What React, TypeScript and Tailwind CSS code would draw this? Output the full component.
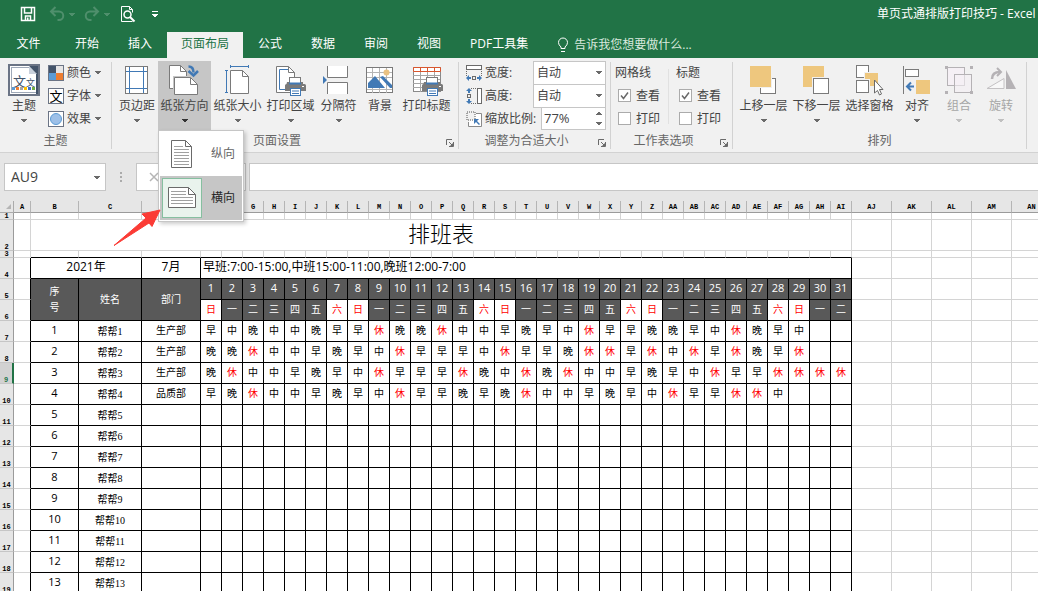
import React, { useState } from 'react';
import clsx from 'clsx';

const TABS = ['开始', '插入', '页面布局', '公式', '数据', '审阅', '视图', 'PDF工具集'];
const WEEK = ['日', '一', '二', '三', '四', '五', '六'];
const DAYS = Array.from({ length: 31 }, (_, i) => i + 1);

const DAY_LETTERS = [
  'E', 'F', 'G', 'H', 'I', 'J', 'K', 'L', 'M', 'N', 'O', 'P', 'Q', 'R', 'S', 'T', 'U', 'V', 'W', 'X', 'Y', 'Z',
  'AA', 'AB', 'AC', 'AD', 'AE', 'AF', 'AG', 'AH', 'AI'
];
const EXTRA_LETTERS = ['AJ', 'AK', 'AL', 'AM', 'AN'];

const STAFF = [
  { dept: '生产部', shifts: '早中晚中中晚早早休晚晚休中中早晚早中休早早晚晚早中休晚早中' },
  { dept: '生产部', shifts: '晚晚休中中早晚早中休早早早中休早早晚休休早休中休早休晚早休' },
  { dept: '生产部', shifts: '晚休中中早晚早中休早早早休晚中休晚休中中早晚早中休早早休休休休' },
  { dept: '品质部', shifts: '早晚休中中早晚早中休早早晚早晚休中中早晚早中休早早休休中' },
  ...Array.from({ length: 9 }, () => ({ dept: '', shifts: '' }))
];

const Caret = ({ className }: { className?: string }) => (
  <svg viewBox="0 0 6 3" className={clsx('w-[6px] h-[3px] shrink-0', className)} shapeRendering="crispEdges" aria-hidden="true">
    <path d="M0 0h6v1h-1v1h-1v1h-2v-1h-1v-1h-1z" fill="currentColor" />
  </svg>
);

const Printer = ({ x }: { x: number }) => (
  <g transform={`translate(${x} 13)`}>
    <path d="M2 5h3v2h11V5h2v2h1.5q1.5 0 1.5 1.5V14h-5v-2H5v2H0V8.500q0-1.500 1.500-1.500z" fill="#7a7a7a" />
    <rect x="4.500" y=".5" width="11" height="7" fill="#fff" stroke="#7a7a7a" />
    <path d="M4 6.500h12" stroke="#4179b5" strokeWidth="2" />
    <rect x="5.500" y="11.500" width="10" height="7" fill="#fff" stroke="#4179b5" />
    <path d="M7 14h7M7 16.500h7" stroke="#4179b5" />
    <rect x="17" y="9" width="2" height="1" fill="#fff" />
  </g>
);

const icons: Record<string, React.ReactNode> = {
  theme: (
    <>
      <rect x="1" y="1" width="30" height="30" fill="#fff" stroke="#6b7485" strokeWidth="2" />
      <rect x="3.500" y="3.500" width="25" height="25" fill="none" stroke="#9fa9b8" />
      <path d="M21 2h9v28h-2V10z" fill="#44546a" />
      <path d="M21 2l8 8h-8z" fill="#c9d1dc" />
      <text x="5" y="22" fontSize="13" fill="#44546a" fontFamily="'Noto Sans CJK SC', sans-serif">文</text>
      <text x="18" y="22" fontSize="9" fill="#44546a" fontFamily="'Noto Sans CJK SC', sans-serif">文</text>
      <path d="M4 23h3v3H4z" fill="#5b9bd5" />
      <path d="M8 23h3v3H8z" fill="#ed7d31" />
      <path d="M12 23h3v3h-3z" fill="#a5a5a5" />
      <path d="M16 23h3v3h-3z" fill="#ffc000" />
      <path d="M20 23h3v3h-3z" fill="#4472c4" />
      <path d="M24 23h3v3h-3z" fill="#70ad47" />
    </>
  ),
  margins: (
    <>
      <rect x="6.500" y="2.500" width="22" height="27" fill="#fff" stroke="#7a7a7a" />
      <path d="M10.500 3v26M24.500 3v26M7 7.500h21M7 24.500h21" stroke="#4179b5" />
    </>
  ),
  orientation: (
    <>
      <path d="M3.500 1.500h11l6 6v17h-17z" fill="#fff" stroke="#7a7a7a" />
      <path d="M14.500 1.500v6h6" fill="none" stroke="#7a7a7a" />
      <path d="M7 12h19v3H10v11H7z" fill="#c6c6c6" />
      <path d="M8.500 13.500h16l7 7v10h-23z" fill="#fff" stroke="#7a7a7a" />
      <path d="M24.500 13.500v7h7" fill="none" stroke="#7a7a7a" />
      <path d="M22.500 2.500q5 0 5 6" fill="none" stroke="#4179b5" strokeWidth="2.500" />
      <path d="M22.500 7l5 4.500L32 7" fill="none" stroke="#4179b5" strokeWidth="2.500" />
    </>
  ),
  size: (
    <>
      <path d="M11.500 6.500h12l6 6v17h-18z" fill="#fff" stroke="#7a7a7a" />
      <path d="M23.500 6.500v6h6" fill="none" stroke="#7a7a7a" />
      <path d="M11 2.500h19M11.500 1v3M29.500 1v3M7.500 6v23M6 6.500h3M6 28.500h3" stroke="#4179b5" />
    </>
  ),
  area: (
    <>
      <path d="M4.500 2.500h12l6 6v20h-18z" fill="#fff" stroke="#7a7a7a" />
      <path d="M13 5.500H7.500v20H13M13 5.500h3" fill="none" stroke="#4179b5" />
      <path d="M16.500 2.500v6h6" fill="none" stroke="#7a7a7a" />
      <Printer x={13} />
    </>
  ),
  breaks: (
    <>
      <path d="M7.500 2v11.500h20V2" fill="#fff" stroke="#7a7a7a" />
      <path d="M7.500 30V18.500h20V30" fill="#fff" stroke="#7a7a7a" />
      <path d="M3 12l4 4-4 4z" fill="#4179b5" />
    </>
  ),
  background: (
    <>
      <rect x="4.500" y="3.500" width="26" height="25" fill="#fff" stroke="#7a7a7a" />
      <path d="M10.500 4v25M17.500 4v25M24.500 4v25M5 8.500h25M5 13.500h25M5 25.500h25" stroke="#b5b5b5" />
      <circle cx="24.500" cy="8.500" r="3" fill="#eac282" />
      <path d="M6 24v-5l7-7 10 12zM18 13l3-1 9 9v3h-2z" fill="#4179b5" />
    </>
  ),
  titles: (
    <>
      <rect x="5.500" y="3.500" width="27" height="24" fill="#fff" stroke="#8a8a8a" />
      <path d="M5 11.500h27M5 15.500h27M5 19.500h27M5 23.500h27M12.500 4v24M19.500 4v24M26.500 4v24" stroke="#a6a6a6" />
      <path d="M5.500 3.500h27v4h-27zM12.500 4v3M19.500 4v3M26.500 4v3" fill="#fff" stroke="#d8562e" />
      <Printer x={14} />
    </>
  ),
  forward: (
    <>
      <rect x="15.500" y="14.500" width="15" height="15" fill="#fff" stroke="#7a7a7a" />
      <path d="M5 2h22v22H5z" fill="#f1f1f1" />
      <path d="M5 2h21v21H5z" fill="#eec77e" />
    </>
  ),
  backward: (
    <>
      <path d="M5 2h21v21H5z" fill="#eec77e" />
      <path d="M14 13h18v18H14z" fill="#f1f1f1" />
      <rect x="15.500" y="14.500" width="15" height="15" fill="#fff" stroke="#7a7a7a" />
    </>
  ),
  pane: (
    <>
      <rect x="5.500" y="1.500" width="12" height="12" fill="#fff" stroke="#7a7a7a" />
      <path d="M13 8h14v14H13z" fill="#f1f1f1" />
      <path d="M14 9h13v13H14z" fill="#eec77e" />
      <path d="M13 15h6v8h-6z" fill="#f1f1f1" />
      <rect x="5.500" y="16.500" width="12" height="12" fill="#fff" stroke="#7a7a7a" />
      <path d="M23.500 16v13l3-2.500 2 4.500 2-1-2-4.500h3.500z" fill="#fff" stroke="#6a6a6a" />
    </>
  ),
  align: (
    <>
      <path d="M4.500 2v28" stroke="#7a7a7a" />
      <rect x="6.500" y="5.500" width="13" height="7" fill="#fff" stroke="#7a7a7a" />
      <path d="M17 16h14v14H17z" fill="#eec77e" />
      <path d="M15 22.500H8M12 18.500l-4 4 4 4" fill="none" stroke="#4179b5" strokeWidth="2" />
    </>
  ),
  group: (
    <>
      <rect x="6.500" y="3.500" width="17" height="18" fill="#f5f0f5" stroke="#b5b2b5" />
      <rect x="13.500" y="10.500" width="17" height="18" fill="#f5f0f5" fillOpacity=".6" stroke="#b5b2b5" />
      <path d="M4 2h3v3H4zM29 2h3v3h-3zM4 27h3v3H4zM29 27h3v3h-3z" fill="#b5b2b5" />
    </>
  ),
  rotate: (
    <>
      <path d="M4 24.500l17-10v10z" fill="#f8f8f8" stroke="#c4c2c4" />
      <path d="M23 6l10 19H23z" fill="#b5b2b5" />
      <path d="M9 15q0-7 8-7" fill="none" stroke="#b5b2b5" strokeWidth="2.500" />
      <path d="M14 4l4 4-4 4" fill="none" stroke="#b5b2b5" strokeWidth="2" />
    </>
  )
};

const BigButton = ({ icon, label, width, caret = true, active = false, disabled = false }: {
  icon: string; label: string; width: string; caret?: boolean; active?: boolean; disabled?: boolean;
}) => {
  const wide = width === 'w-[53px]' || width === 'w-[43px]';
  const size = icon === 'theme' ? 'w-8' : wide ? 'w-[37px]' : 'w-9';
  const box = icon === 'theme' ? '0 0 32 32' : wide ? '0 0 37 32' : '0 0 36 32';
  return (
    <button
      type="button"
      disabled={disabled}
      className={clsx(
        'flex h-[69px] shrink-0 flex-col items-center pt-[3px] whitespace-nowrap',
        width,
        active && 'bg-[#c6c6c6]',
        disabled && 'text-[#a6a6a6]'
      )}
    >
      <svg viewBox={box} className={clsx('h-8 shrink-0', size)} aria-hidden="true">{icons[icon]}</svg>
      <span className="leading-5">{label}</span>
      {caret && <Caret className={clsx('mt-[3px]', disabled ? 'text-[#c0c0c0]' : active ? 'text-[#333]' : 'text-[#6a6a6a]')} />}
    </button>
  );
};

const RibbonGroup = ({ title, width, launcher = false, children }: {
  title: string; width: string; launcher?: boolean; children: React.ReactNode;
}) => (
  <section className={clsx('flex shrink-0 pt-[3px]', width)}>
    <div className="flex min-w-0 flex-1 flex-col">
      <div className="flex h-[69px]">{children}</div>
      <div className="flex h-6 items-center">
        <h2 className={clsx('flex-1 text-center text-[#666]', launcher && 'pl-1 pr-2')}>{title}</h2>
        {launcher && (
          <button type="button" aria-label={title} className="mt-1 mr-1 w-2">
            <svg viewBox="0 0 8 8" className="h-2 w-2" aria-hidden="true">
              <path d="M.5 6V.5H6M3 3l3 3M7.500 3v4.500H3" fill="none" stroke="#6a6a6a" />
              <path d="M7 4v3H4z" fill="#6a6a6a" />
            </svg>
          </button>
        )}
      </div>
    </div>
    <div className="mt-px h-[87px] w-px bg-[#d2d2d2]" />
  </section>
);

const SmallButton = ({ label, children }: { label: string; children: React.ReactNode }) => (
  <button type="button" className="flex h-[23px] items-center">
    <svg viewBox="0 0 16 16" className="mr-[3px] h-4 w-4 overflow-visible" aria-hidden="true">{children}</svg>
    {label}
    <Caret className="ml-1 text-[#6a6a6a]" />
  </button>
);

const ScaleRow = ({ id, label, icon, children }: {
  id: string; label: string; icon: React.ReactNode; children: React.ReactNode;
}) => (
  <div className="flex h-[23px] items-center">
    <svg viewBox="0 0 16 16" className="mr-[3px] h-4 w-4 shrink-0" aria-hidden="true">{icon}</svg>
    <label htmlFor={id} className="flex-1 whitespace-nowrap">{label}</label>
    {children}
  </div>
);

const AutoSelect = ({ id }: { id: string }) => (
  <div className="relative">
    <select id={id} className="block h-6 w-[73px] appearance-none border border-[#c6c6c6] bg-white pl-[3px] leading-5">
      <option>自动</option>
    </select>
    <Caret className="pointer-events-none absolute top-[10px] right-1 text-[#6a6a6a]" />
  </div>
);

const Check = ({ label, defaultChecked = false }: { label: string; defaultChecked?: boolean }) => (
  <label className="flex h-[23px] items-center pl-[3px]">
    <span className="relative mr-[5px] h-[13px] w-[13px]">
      <input
        type="checkbox"
        defaultChecked={defaultChecked}
        className="peer block h-[13px] w-[13px] appearance-none border border-[#ababab] bg-white"
      />
      <svg viewBox="0 0 13 13" className="pointer-events-none absolute inset-0 hidden peer-checked:block" aria-hidden="true">
        <path d="M3 6.500l2.500 3L10 3.500" fill="none" stroke="#6a6a6a" strokeWidth="1.500" />
      </svg>
    </span>
    {label}
  </label>
);

const OrientationMenu = () => (
  <div role="menu" className="absolute top-[69px] left-0 z-10 w-[86px] border border-[#c6c6c6] bg-white p-px shadow-[2px_2px_4px_rgba(0,0,0,0.2)]">
    <button type="button" role="menuitem" className="flex h-11 w-full items-center">
      <svg viewBox="0 0 40 40" className="mr-[9px] ml-0.5 h-10 w-10" aria-hidden="true">
        <path d="M9.500 6.500h14l6 6v21h-20z" fill="#fff" stroke="#6a6a6a" />
        <path d="M23.500 6.500v6h6" fill="none" stroke="#6a6a6a" />
        <path d="M12 12.500h9M12 15.500h15M12 18.500h15M12 21.500h15M12 24.500h15M12 27.500h15M12 30.500h15" stroke="#a0a0a0" />
      </svg>
      <span className="text-[#666]">纵向</span>
    </button>
    <button type="button" role="menuitem" className="flex h-11 w-full items-center bg-[#c6c6c6] text-[#262626]">
      <span className="mr-[9px] ml-0.5 border border-[#86bfa0] bg-[#e9f3ed]">
        <svg viewBox="0 0 38 38" className="h-[38px] w-[38px]" aria-hidden="true">
          <path d="M5.500 8.500h20l7 7v13h-27z" fill="#fff" stroke="#6a6a6a" />
          <path d="M25.500 8.500v7h7" fill="none" stroke="#6a6a6a" />
          <path d="M8 12.500h15M8 15.500h15M8 18.500h22M8 21.500h22M8 24.500h22" stroke="#a0a0a0" />
        </svg>
      </span>
      横向
    </button>
    <svg viewBox="0 0 48 38" className="pointer-events-none absolute top-[78px] left-[-46px] h-[38px] w-12" aria-hidden="true">
      <path d="M47 1L29 5l4 4L1 36.500 36 14l3 3.500z" fill="#fb3b35" stroke="#fb3b35" strokeLinejoin="round" />
    </svg>
  </div>
);

const TitleBar = () => (
  <header className="flex h-7 items-center pl-5 text-white">
    <button type="button" aria-label="保存">
      <svg viewBox="0 0 16 16" className="h-4 w-4" aria-hidden="true">
        <path d="M1.500 1.500h13v13h-13zM4.500 2v5h7V2M5.500 14v-4h5v4" fill="none" stroke="#fff" strokeWidth="1.500" />
        <path d="M7 11.500h1.500V14H7z" fill="#fff" />
      </svg>
    </button>
    <button type="button" aria-label="撤消" className="ml-[13px] flex items-center text-[#4f8f6c]">
      <svg viewBox="0 0 16 16" className="h-4 w-4" aria-hidden="true">
        <path d="M6.500 1L2 5.500 6.500 10M2 5.500h8a4 4 0 0 1 0 8.500H8.500" fill="none" stroke="currentColor" strokeWidth="2" />
      </svg>
      <Caret className="ml-1" />
    </button>
    <button type="button" aria-label="恢复" className="ml-[9px] flex items-center text-[#4f8f6c]">
      <svg viewBox="0 0 16 16" className="h-4 w-4" aria-hidden="true">
        <path d="M9.500 1L14 5.500 9.500 10M14 5.500H6A4 4 0 0 0 6 14h1.500" fill="none" stroke="currentColor" strokeWidth="2" />
      </svg>
      <Caret className="ml-1" />
    </button>
    <button type="button" aria-label="打印预览" className="ml-[10px]">
      <svg viewBox="0 0 16 18" className="h-[18px] w-4" aria-hidden="true">
        <path d="M12.500 16.500H1.500v-15h8l3 3v3M9.500 1.500v3h3" fill="none" stroke="#fff" />
        <circle cx="7.500" cy="9.500" r="3.500" fill="#217346" stroke="#fff" strokeWidth="1.500" />
        <path d="M10 12l4.500 4.500" stroke="#fff" strokeWidth="2" />
      </svg>
    </button>
    <button type="button" aria-label="自定义快速访问工具栏" className="ml-4 flex flex-col items-center gap-[2px]">
      <span className="h-px w-[6px] bg-white" />
      <Caret />
    </button>
    <h1 className="ml-auto w-[161px] shrink-0 whitespace-nowrap">单页式通排版打印技巧 - Excel</h1>
  </header>
);

const TabBar = () => {
  const [active, setActive] = useState('页面布局');
  return (
    <nav className="mt-1 flex h-[26px] gap-px text-white">
      <button type="button" className="w-[57px] pb-0.5">文件</button>
      <div className="w-0.5" />
      {TABS.map((tab) => (
        <button
          key={tab}
          type="button"
          onClick={() => setActive(tab)}
          className={clsx('px-3.5 pb-0.5 whitespace-nowrap', tab === active && 'bg-[#f1f1f1] text-[#217346]')}
        >
          {tab}
        </button>
      ))}
      <button type="button" className="ml-3.5 flex items-center whitespace-nowrap text-[#d9e9df]">
        <svg viewBox="0 0 12 16" className="mr-[5px] h-4 w-3" aria-hidden="true">
          <path d="M4 11.500V10Q1.500 8 1.500 5.500a4.500 4.500 0 0 1 9 0Q10.500 8 8 10v1.500zM4 14.500h4" fill="none" stroke="#fff" />
        </svg>
        告诉我您想要做什么...
      </button>
    </nav>
  );
};

const Ribbon = () => (
  <div className="flex h-[95px] shrink-0 border-b border-[#d2d2d2] bg-[#f1f1f1] text-[#444]">
    <RibbonGroup title="主题" width="w-[112px]">
      <div className="flex pl-[5px]">
        <BigButton icon="theme" label="主题" width="w-[38px]" />
        <div className="ml-[5px] flex flex-col">
          <SmallButton label="颜色">
            <rect x=".5" y=".5" width="15" height="15" fill="#e7e6e6" stroke="#6b7485" />
            <path d="M1 1h7v7H1z" fill="#44546a" />
            <path d="M1 8h7v7H1z" fill="#5b9bd5" />
            <path d="M8 8h7v7H8z" fill="#ed7d31" />
          </SmallButton>
          <SmallButton label="字体">
            <rect x=".5" y=".5" width="15" height="15" fill="#fff" stroke="#6b7485" />
            <text x="1.500" y="13" fontSize="13" fill="#000" fontFamily="'Noto Sans CJK SC', sans-serif">文</text>
          </SmallButton>
          <SmallButton label="效果">
            <rect x=".5" y=".5" width="15" height="15" fill="#fff" stroke="#6b7485" />
            <circle cx="8" cy="8" r="5.500" fill="#9dc0e8" stroke="#5b9bd5" />
          </SmallButton>
        </div>
      </div>
    </RibbonGroup>

    <RibbonGroup title="页面设置" width="w-[347px]" launcher>
      <div className="flex pl-1">
        <BigButton icon="margins" label="页边距" width="w-[42px]" />
        <div className="relative">
          <BigButton icon="orientation" label="纸张方向" width="w-[53px]" active />
          <OrientationMenu />
        </div>
        <BigButton icon="size" label="纸张大小" width="w-[53px]" />
        <BigButton icon="area" label="打印区域" width="w-[53px]" />
        <BigButton icon="breaks" label="分隔符" width="w-[43px]" />
        <BigButton icon="background" label="背景" width="w-[40px]" caret={false} />
        <BigButton icon="titles" label="打印标题" width="w-[53px]" caret={false} />
      </div>
    </RibbonGroup>

    <RibbonGroup title="调整为合适大小" width="w-[152px]" launcher>
      <div className="flex flex-1 flex-col pr-1 pl-[7px]">
        <ScaleRow
          id="fit-width"
          label="宽度:"
          icon={
            <>
              <rect x=".5" y=".5" width="15" height="4" fill="#fff" stroke="#6a6a6a" />
              <path d="M.5 6v5M15.500 6v5" stroke="#6a6a6a" strokeDasharray="1 1" />
              <rect x="6.500" y="11.500" width="3" height="3" fill="none" stroke="#6a6a6a" />
              <path d="M0 13l3-3v2h2v2H3v2zM16 13l-3-3v2h-2v2h2v2z" fill="#4179b5" />
            </>
          }
        >
          <AutoSelect id="fit-width" />
        </ScaleRow>
        <ScaleRow
          id="fit-height"
          label="高度:"
          icon={
            <>
              <rect x="11.500" y=".5" width="4" height="15" fill="#fff" stroke="#6a6a6a" />
              <path d="M5 .5h5M5 15.500h5" stroke="#6a6a6a" strokeDasharray="1 1" />
              <rect x="1.500" y="6.500" width="3" height="3" fill="none" stroke="#6a6a6a" />
              <path d="M3 0l3 3H4v2H2V3H0zM3 16l3-3H4v-2H2v2H0z" fill="#4179b5" />
            </>
          }
        >
          <AutoSelect id="fit-height" />
        </ScaleRow>
        <ScaleRow
          id="fit-scale"
          label="缩放比例:"
          icon={
            <>
              <path d="M10 2.500h5.500v13h-13V11" fill="#fff" stroke="#8a8a8a" />
              <rect x="1" y="1" width="8" height="8" fill="#f1f1f1" stroke="#555" strokeDasharray="1 1" />
              <path d="M8 8h5l-2 2 3 3-1 1-3-3-2 2z" fill="#4179b5" />
            </>
          }
        >
          <div className="flex h-[23px] w-[65px] border border-[#c6c6c6] bg-white">
            <input id="fit-scale" defaultValue="77%" className="w-0 min-w-0 flex-1 pl-0.5 text-[13px] outline-none" />
            <div className="flex w-3 flex-col items-center justify-between py-1 text-[#6a6a6a]">
              <button type="button" aria-label="增大"><Caret className="block rotate-180" /></button>
              <button type="button" aria-label="减小"><Caret className="block" /></button>
            </div>
          </div>
        </ScaleRow>
      </div>
    </RibbonGroup>

    <RibbonGroup title="工作表选项" width="w-[122px]" launcher>
      <fieldset className="flex w-[57px] flex-col pl-1">
        <span className="flex h-[23px] items-center">网格线</span>
        <Check label="查看" defaultChecked />
        <Check label="打印" />
      </fieldset>
      <div className="mt-2 mb-1.5 w-px bg-[#e1e1e1]" />
      <fieldset className="flex flex-col pl-[7px] whitespace-nowrap">
        <span className="flex h-[23px] items-center">标题</span>
        <Check label="查看" defaultChecked />
        <Check label="打印" />
      </fieldset>
    </RibbonGroup>

    <RibbonGroup title="排列" width="w-[294px]">
      <div className="flex pl-1">
        <BigButton icon="forward" label="上移一层" width="w-[53px]" />
        <BigButton icon="backward" label="下移一层" width="w-[53px]" />
        <BigButton icon="pane" label="选择窗格" width="w-[53px]" caret={false} />
        <BigButton icon="align" label="对齐" width="w-[42px]" />
        <BigButton icon="group" label="组合" width="w-[42px]" disabled />
        <BigButton icon="rotate" label="旋转" width="w-[42px]" disabled />
      </div>
    </RibbonGroup>
  </div>
);

const FormulaBar = () => (
  <div className="flex h-12 shrink-0 items-start pt-[10px] pl-1">
    <div className="flex h-7 w-[102px] items-center border border-[#c6c6c6] bg-white pr-[5px] pl-1.5">
      <input aria-label="名称框" defaultValue="AU9" className="w-0 min-w-0 flex-1 text-sm text-[#444] outline-none" />
      <Caret className="text-[#6a6a6a]" />
    </div>
    <div className="mt-[9px] mr-[14px] ml-[14px] flex w-0.5 flex-col gap-[2px]">
      <span className="h-0.5 bg-[#ababab]" />
      <span className="h-0.5 bg-[#ababab]" />
      <span className="h-0.5 bg-[#ababab]" />
    </div>
    <div className="flex h-7 w-[110px] items-center border border-[#c6c6c6] bg-white pl-3">
      <button type="button" aria-label="取消">
        <svg viewBox="0 0 10 10" className="h-[10px] w-[10px]" aria-hidden="true">
          <path d="M1 1l8 8M9 1L1 9" stroke="#b5b5b5" strokeWidth="1.500" />
        </svg>
      </button>
    </div>
    <input aria-label="编辑栏" className="ml-[3px] h-7 min-w-0 flex-1 border border-r-0 border-[#c6c6c6] bg-white" />
  </div>
);

const GRID = 'border-r border-b border-[#d4d4d4]';
const BOX = 'border-r border-b border-black';

const RowHead = ({ n }: { n: number }) => (
  <th
    scope="row"
    className={clsx(
      "border-b border-b-[#c6c6c6] p-0 text-center align-bottom font-['Liberation_Mono',monospace] text-[7px] leading-[6px] font-bold",
      n === 9 ? 'border-r-2 border-r-[#217346] bg-[#d2d2d2] text-[#217346]' : 'border-r border-r-[#9b9b9b] bg-[#e6e6e6] text-black'
    )}
  >
    {n}
  </th>
);

const ExtraCells = () => (
  <>
    {EXTRA_LETTERS.map((l) => <td key={l} className={GRID} />)}
  </>
);

const Sheet = () => (
  <table className="w-0 table-fixed border-separate border-spacing-0 bg-white text-center text-black">
    <colgroup>
      <col className="w-[14px]" />
      <col className="w-[17px]" />
      <col className="w-[48px]" />
      <col className="w-[63px]" />
      <col className="w-[59px]" />
      {DAYS.map((d) => <col key={d} className="w-[21px]" />)}
      {EXTRA_LETTERS.map((l) => <col key={l} className="w-[40px]" />)}
    </colgroup>
    <thead>
      <tr className="h-3 bg-[#e6e6e6] font-['Liberation_Mono',monospace] text-[7px] leading-[9px]">
        <td className="border-r border-b border-[#ababab] p-0">
          <svg viewBox="0 0 5 5" className="ml-1.5 h-[5px] w-[5px]" aria-hidden="true">
            <path d="M5 0v5H0z" fill="#b5b5b5" />
          </svg>
        </td>
        {['A', 'B', 'C', 'D', ...DAY_LETTERS, ...EXTRA_LETTERS].map((l) => (
          <th key={l} scope="col" className="border-r border-b border-r-[#b5b5b5] border-b-[#9b9b9b] p-0 pt-0.5 font-bold">{l}</th>
        ))}
      </tr>
    </thead>
    <tbody>
      <tr className="h-[7px]">
        <RowHead n={1} />
        {['A', 'B', 'C', 'D', ...DAY_LETTERS].map((l) => <td key={l} className={GRID} />)}
        <ExtraCells />
      </tr>
      <tr className="h-[31px]">
        <RowHead n={2} />
        <td className={GRID} />
        <td colSpan={34} className={clsx(GRID, 'p-0 pb-1 text-[22px] leading-[26px] font-light')}>排班表</td>
        <ExtraCells />
      </tr>
      <tr className="h-[7px]">
        <RowHead n={3} />
        <td className={GRID} />
        {['B', 'C', 'D', ...DAY_LETTERS].map((l) => (
          <td key={l} className="border-r border-b border-r-[#d4d4d4] border-b-black" />
        ))}
        <ExtraCells />
      </tr>
      <tr className="h-[21px] text-xs leading-4">
        <RowHead n={4} />
        <td className="border-r border-b border-r-black border-b-[#d4d4d4]" />
        <td colSpan={2} className={clsx(BOX, 'p-0 pb-0.5')}>2021年</td>
        <td className={clsx(BOX, 'p-0 pb-0.5')}>7月</td>
        <td colSpan={31} className={clsx(BOX, 'p-0 pb-0.5 pl-0.5 text-left whitespace-nowrap')}>
          早班:7:00-15:00,中班15:00-11:00,晚班12:00-7:00
        </td>
        <ExtraCells />
      </tr>
      <tr className="h-[21px] text-[11px] leading-4 text-white">
        <RowHead n={5} />
        <td className="border-r border-b border-r-black border-b-[#d4d4d4]" />
        <td rowSpan={2} className={clsx(BOX, 'bg-[#595959] p-0 pb-0.5 text-[10px]')}>序<br />号</td>
        <td rowSpan={2} className={clsx(BOX, 'bg-[#595959] p-0 pb-0.5 text-[10px]')}>姓名</td>
        <td rowSpan={2} className={clsx(BOX, 'bg-[#595959] p-0 pb-0.5 text-[10px]')}>部门</td>
        {DAYS.map((d) => <td key={d} className={clsx(BOX, 'bg-[#595959] p-0 pb-0.5')}>{d}</td>)}
        <ExtraCells />
      </tr>
      <tr className="h-[21px] text-[10px] leading-4">
        <RowHead n={6} />
        <td className="border-r border-b border-r-black border-b-[#d4d4d4]" />
        {DAYS.map((d) => {
          const day = WEEK[(d - 1) % 7];
          const weekend = day === '六' || day === '日';
          return (
            <td key={d} className={clsx(BOX, 'p-0 pb-0.5', weekend ? 'bg-white text-[#ff0000]' : 'bg-[#595959] text-white')}>{day}</td>
          );
        })}
        <ExtraCells />
      </tr>
      {STAFF.map((person, i) => (
        <tr key={i} className="h-[21px] text-[10px] leading-4">
          <RowHead n={i + 7} />
          <td className="border-r border-b border-r-black border-b-[#d4d4d4]" />
          <td className={clsx(BOX, 'p-0 pb-0.5 text-[11px]')}>{i + 1}</td>
          <td className={clsx(BOX, "p-0 pt-0.5 font-['Liberation_Serif','Noto_Sans_CJK_SC',serif]")}>{`帮帮${i + 1}`}</td>
          <td className={clsx(BOX, 'p-0 pb-0.5')}>{person.dept}</td>
          {DAYS.map((d) => {
            const shift = person.shifts[d - 1] ?? '';
            return (
              <td key={d} className={clsx(BOX, 'p-0 pb-0.5', shift === '休' && 'text-[#ff0000]')}>{shift}</td>
            );
          })}
          <ExtraCells />
        </tr>
      ))}
    </tbody>
  </table>
);

const App: React.FC = () => (
  <div className="flex h-screen w-full flex-col overflow-hidden bg-[#e6e6e6] font-['Open_Sans','Noto_Sans_CJK_SC',sans-serif] text-xs">
    <div className="shrink-0 bg-[#217346]">
      <TitleBar />
      <TabBar />
    </div>
    <Ribbon />
    <FormulaBar />
    <main className="min-h-0 flex-1 overflow-hidden">
      <Sheet />
    </main>
  </div>
);

export default App;
